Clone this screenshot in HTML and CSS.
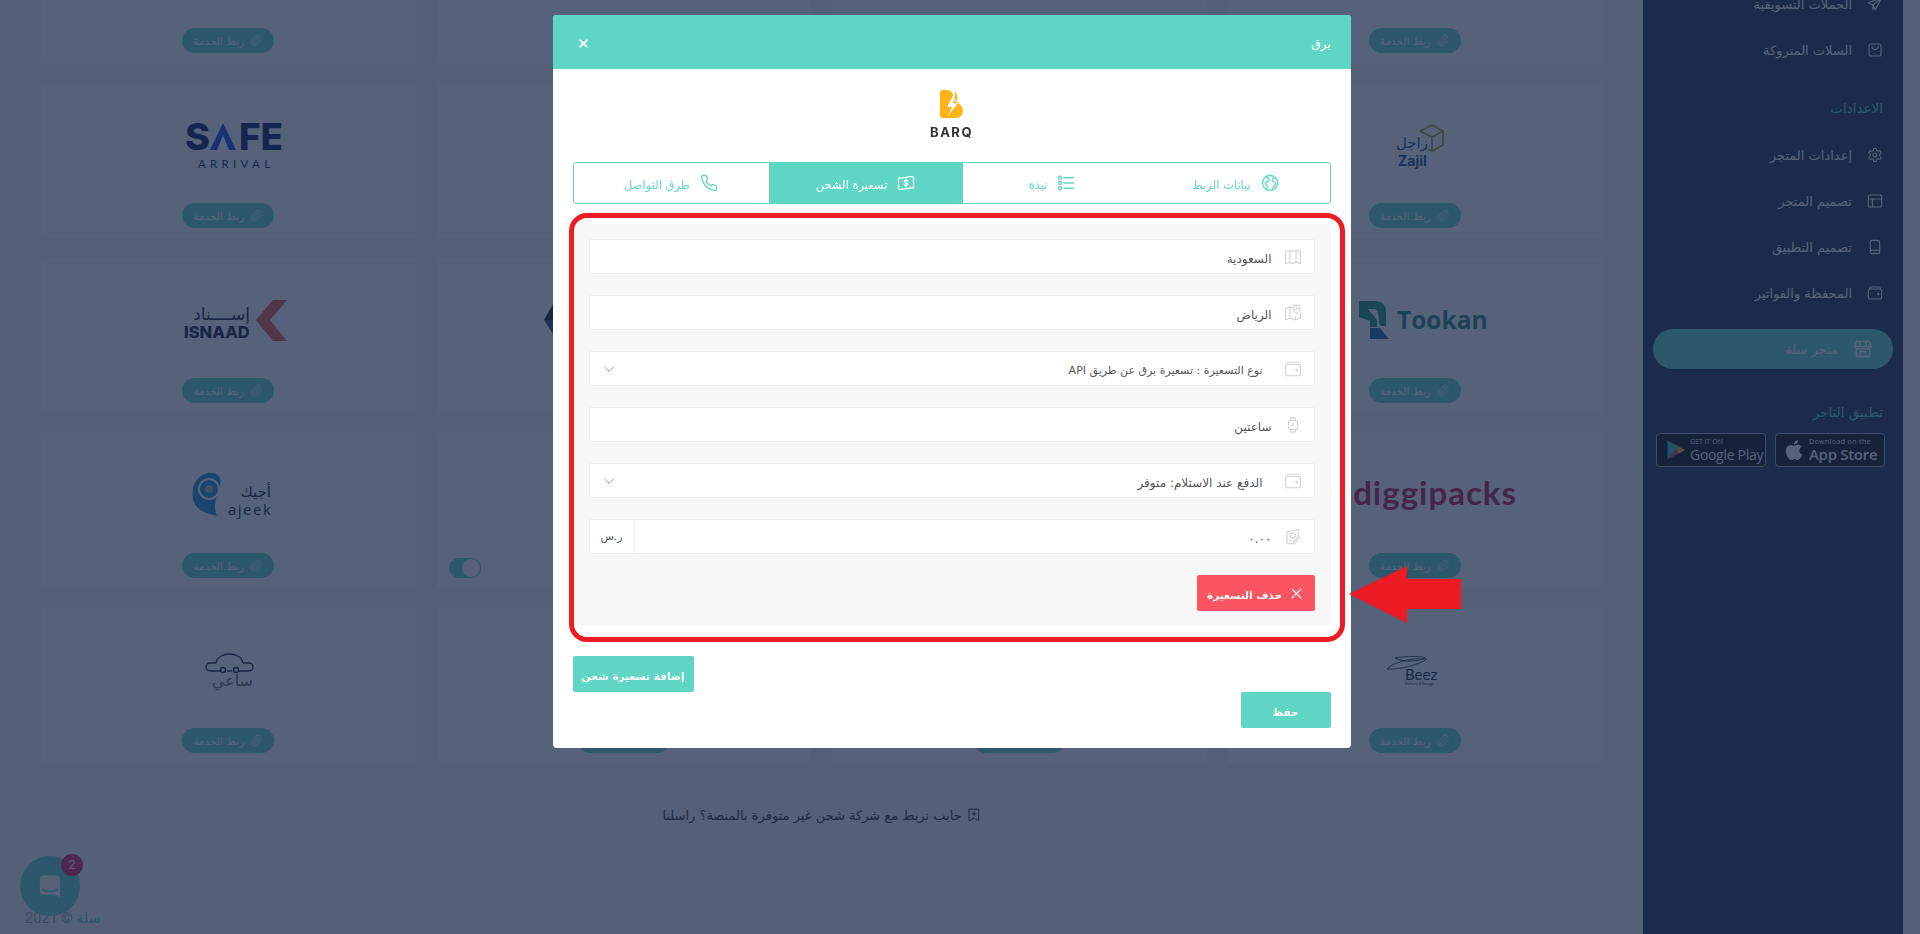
FILE: index.html
```html
<!DOCTYPE html>
<html lang="ar" dir="rtl">
<head>
<meta charset="utf-8">
<title>برق</title>
<link rel="stylesheet" href="styles.css">
</head>
<body>
<svg class="defs" xmlns="http://www.w3.org/2000/svg">
  <symbol id="i-clip" viewBox="0 0 24 24"><path d="m21.44 11.05-9.19 9.19a6 6 0 0 1-8.49-8.49l8.57-8.57A4 4 0 1 1 18 8.84l-8.59 8.57a2 2 0 0 1-2.83-2.83l8.49-8.48"/></symbol>
  <symbol id="i-plane" viewBox="0 0 24 24"><path d="M22 3 2 10l7 3.5L12.5 21zM9 13.5 22 3"/><path d="M9 13.5V20l3-3"/></symbol>
  <symbol id="i-bag" viewBox="0 0 24 24"><rect x="3" y="3" width="18" height="18" rx="3"/><path d="M7.500 6.500c0 6.500 9 6.500 9 0"/></symbol>
  <symbol id="i-gear" viewBox="0 0 24 24"><path d="M12.220 2h-.44a2 2 0 0 0-2 2v.18a2 2 0 0 1-1 1.730l-.43.25a2 2 0 0 1-2 0l-.15-.08a2 2 0 0 0-2.730.730l-.22.38a2 2 0 0 0 .73 2.730l.15.1a2 2 0 0 1 1 1.720v.51a2 2 0 0 1-1 1.740l-.15.09a2 2 0 0 0-.73 2.730l.22.38a2 2 0 0 0 2.730.730l.15-.08a2 2 0 0 1 2 0l.43.25a2 2 0 0 1 1 1.730V20a2 2 0 0 0 2 2h.44a2 2 0 0 0 2-2v-.18a2 2 0 0 1 1-1.730l.43-.25a2 2 0 0 1 2 0l.15.08a2 2 0 0 0 2.730-.730l.22-.39a2 2 0 0 0-.73-2.730l-.15-.08a2 2 0 0 1-1-1.740v-.5a2 2 0 0 1 1-1.740l.15-.09a2 2 0 0 0 .73-2.730l-.22-.38a2 2 0 0 0-2.730-.730l-.15.08a2 2 0 0 1-2 0l-.43-.25a2 2 0 0 1-1-1.730V4a2 2 0 0 0-2-2z"/><circle cx="12" cy="12" r="3"/></symbol>
  <symbol id="i-layout" viewBox="0 0 24 24"><rect x="2" y="3" width="20" height="18" rx="2"/><path d="M2 9h20M8 9v12"/></symbol>
  <symbol id="i-tablet" viewBox="0 0 24 24"><rect x="5" y="2" width="14" height="20" rx="2.500"/><path d="M5 17h14M12 19.500h.01"/></symbol>
  <symbol id="i-wallet" viewBox="0 0 24 24"><rect x="2" y="6" width="20" height="15" rx="3"/><path d="M4 6V5.500A2.500 2.500 0 0 1 6.500 3h11A2.500 2.500 0 0 1 20 5.500V6"/><circle cx="17" cy="13.500" r="1"/></symbol>
  <symbol id="i-store" viewBox="0 0 24 24"><path d="M4 3h16l2 6a3 3 0 0 1-5 2 3.500 3.500 0 0 1-5 0 3.500 3.500 0 0 1-5 0 3 3 0 0 1-5-2z"/><path d="M4 12v9h16v-9M9 21v-6h6v6M2 9h20M9 3 7.500 9M15 3l1.500 6"/></symbol>
  <symbol id="i-map" viewBox="0 0 24 24"><path d="M2 5c3-2 7-2 10 0 3-2 7-2 10 0v16c-3-2-7-2-10 0-3-2-7-2-10 0z"/><path d="M8 3.600v16M16 3.600v16"/></symbol>
  <symbol id="i-pin" viewBox="0 0 24 24"><path d="M11 5 8 4 2 6v15l6-2 7 2 7-2v-7"/><path d="M8 4v15M15 16v5"/><path d="M17 1.500a4.500 4.500 0 0 1 4.500 4.500c0 3.500-4.500 7-4.500 7s-4.500-3.500-4.500-7A4.500 4.500 0 0 1 17 1.500z"/><circle cx="17" cy="6" r="1"/></symbol>
  <symbol id="i-watch" viewBox="0 0 24 24"><rect x="6" y="6" width="12" height="12" rx="3.500"/><path d="m8.500 6 .8-3.500h5.400l.8 3.500M8.500 18l.8 3.500h5.400l.8-3.500M12 9v3.500H9.500"/></symbol>
  <symbol id="i-cash" viewBox="0 0 24 24"><path d="M4 21V5l15-3v8M4 21h9"/><circle cx="11.500" cy="10" r="3.500"/><path d="M8 17h4M21 13l-6 7-2.500.8.500-2.800 6-6.500z"/></symbol>
  <symbol id="i-globe" viewBox="0 0 24 24"><circle cx="12" cy="12" r="10"/><path d="M8 2.800c-1 2.200 1 3.200 2.500 4 1.500 1 .5 3-1 3.200-2.500.4-4.500 1-3.500 3.500l1.800 2.500c1 1.500.2 3 .2 5M20 5.500c-2 .2-4.500.5-5 2.500-.3 2 1.500 2.500 3 3 2 .8 1.500 2.500.5 3.500l-3 5"/></symbol>
  <symbol id="i-list" viewBox="0 0 24 24"><circle cx="4" cy="5" r="2"/><circle cx="4" cy="12" r="2"/><circle cx="4" cy="19" r="2"/><path d="M9 5h13M9 12h13M9 19h13"/></symbol>
  <symbol id="i-note" viewBox="0 0 24 24"><path d="M2 5c6 2 14-3 20-1v15c-6-2-14 3-20 1z"/><path d="M14.500 9c-1-1-5-.8-5 1.200 0 2.300 5 1 5 3.300 0 2-4 2-5 1M12 7v10"/></symbol>
  <symbol id="i-phone" viewBox="0 0 24 24"><path d="M22 16.920v3a2 2 0 0 1-2.180 2 19.790 19.790 0 0 1-8.630-3.070 19.500 19.500 0 0 1-6-6 19.790 19.790 0 0 1-3.070-8.670A2 2 0 0 1 4.110 2h3a2 2 0 0 1 2 1.720 12.840 12.840 0 0 0 .7 2.810 2 2 0 0 1-.45 2.110L8.090 9.910a16 16 0 0 0 6 6l1.270-1.270a2 2 0 0 1 2.110-.45 12.840 12.840 0 0 0 2.810.7A2 2 0 0 1 22 16.920z"/></symbol>
  <symbol id="i-chev" viewBox="0 0 24 24"><path d="m5 9 7 7 7-7"/></symbol>
  <symbol id="i-x" viewBox="0 0 24 24"><path d="M5 5l14 14M19 5 5 19"/></symbol>
  <symbol id="i-mark" viewBox="0 0 24 24"><path d="M4 2h16v20l-8-5-8 5z"/><path d="M12 7v6M9 10h6"/></symbol>
</svg>

<div class="page">
  <main class="main">
    <div class="grid">
      <div class="card"><div class="logo"></div><a class="link-btn"><svg class="ico"><use href="#i-clip"/></svg>ربط الخدمة</a></div>
      <div class="card"><div class="logo"></div><a class="link-btn"><svg class="ico"><use href="#i-clip"/></svg>ربط الخدمة</a></div>
      <div class="card"><div class="logo"></div><a class="link-btn"><svg class="ico"><use href="#i-clip"/></svg>ربط الخدمة</a></div>
      <div class="card"><div class="logo"></div><a class="link-btn"><svg class="ico"><use href="#i-clip"/></svg>ربط الخدمة</a></div>

      <div class="card">
        <div class="logo">
          <svg class="brand" viewBox="0 0 58 43" width="58" height="43">
            <path class="zj-box" d="M34 7 46 1 57 7v14l-11 6-4-2M34 7l12 6 11-6M46 13v14"/>
            <text class="zj-ar" x="26" y="24" text-anchor="middle">زاجل</text>
            <text class="zj-en" x="12" y="42">Zajil</text>
          </svg>
        </div>
        <a class="link-btn"><svg class="ico"><use href="#i-clip"/></svg>ربط الخدمة</a>
      </div>
      <div class="card"><div class="logo"></div><a class="link-btn"><svg class="ico"><use href="#i-clip"/></svg>ربط الخدمة</a></div>
      <div class="card"><div class="logo"></div><a class="link-btn"><svg class="ico"><use href="#i-clip"/></svg>ربط الخدمة</a></div>
      <div class="card">
        <div class="logo">
          <svg class="brand" viewBox="0 0 109 45" width="109" height="45">
            <text class="safe-big" x="11" y="27" textLength="25" lengthAdjust="spacingAndGlyphs">S</text>
            <polygon class="safe-tri" points="36,27 49,0 62,27 55,27 49,12 43,27"/>
            <text class="safe-big" x="65" y="27" textLength="44" lengthAdjust="spacingAndGlyphs">FE</text>
            <text class="safe-small" x="24" y="45">ARRIVAL</text>
          </svg>
        </div>
        <a class="link-btn"><svg class="ico"><use href="#i-clip"/></svg>ربط الخدمة</a>
      </div>

      <div class="card">
        <div class="logo">
          <svg class="brand" viewBox="0 0 142 40" width="142" height="40">
            <path class="tk-a" d="M15 1H32Q42 2 42 12V26H36L34 13Q33 9 29 9H24L33 20V27H26V21L15 17z"/>
            <path class="tk-b" d="M26 28H36L45 39H26z"/>
            <text class="tk-text" x="53" y="29">Tookan</text>
          </svg>
        </div>
        <a class="link-btn"><svg class="ico"><use href="#i-clip"/></svg>ربط الخدمة</a>
      </div>
      <div class="card"><div class="logo"></div><a class="link-btn"><svg class="ico"><use href="#i-clip"/></svg>ربط الخدمة</a></div>
      <div class="card">
        <div class="logo">
          <svg class="brand" viewBox="0 0 160 40" width="160" height="40"><polygon class="hex-a" points="0,20 9,4 14,4 14,20"/><polygon class="hex-b" points="0,20 14,20 14,38 9,34"/></svg>
        </div>
        <a class="link-btn"><svg class="ico"><use href="#i-clip"/></svg>ربط الخدمة</a>
      </div>
      <div class="card">
        <div class="logo">
          <svg class="brand" viewBox="0 0 119 41" width="119" height="41">
            <text class="is-ar" x="81" y="20" text-anchor="end">إســــناد</text>
            <text class="is-en" x="15" y="38">ISNAAD</text>
            <polygon class="is-chev" points="118,0 104,0 87,20 104,41 118,41 101,20"/>
          </svg>
        </div>
        <a class="link-btn"><svg class="ico"><use href="#i-clip"/></svg>ربط الخدمة</a>
      </div>

      <div class="card">
        <div class="logo">
          <svg class="brand" viewBox="0 0 204 40" width="204" height="40">
            <text class="digi" x="204" y="30" text-anchor="end">diggipacks</text>
          </svg>
        </div>
        <a class="link-btn"><svg class="ico"><use href="#i-clip"/></svg>ربط الخدمة</a>
      </div>
      <div class="card"><div class="logo"></div><a class="link-btn"><svg class="ico"><use href="#i-clip"/></svg>ربط الخدمة</a></div>
      <div class="card"><div class="logo"></div><span class="toggle"><span class="knob"></span></span></div>
      <div class="card">
        <div class="logo">
          <svg class="brand" viewBox="0 0 87 44" width="87" height="44">
            <path class="aj-drop" d="M23 0c9-1 14 4 12 12-2 10-8 20-3 31C20 40 10 37 8 26 6 13 12 2 23 0z"/>
            <circle class="aj-ring" cx="24" cy="16" r="11"/>
            <circle class="aj-drop" cx="24" cy="16" r="9"/>
            <circle class="aj-pupil" cx="24" cy="16" r="4"/>
            <text class="aj-ar" x="86" y="24" text-anchor="end">أجيك</text>
            <text class="aj-en" x="43" y="42">ajeek</text>
          </svg>
        </div>
        <a class="link-btn"><svg class="ico"><use href="#i-clip"/></svg>ربط الخدمة</a>
      </div>

      <div class="card">
        <div class="logo">
          <svg class="brand" viewBox="0 0 58 30" width="58" height="30">
            <path class="bz-line" d="M9 3c10-2 28-2 30 0-4 3-22 5-30 0zM1 14C10 5 30 3 41 4 34 9 14 15 1 14z"/>
            <text class="bz-text" x="19" y="25">Beez</text>
            <text class="bz-small" x="19" y="30">Delivery &amp; Storage</text>
          </svg>
        </div>
        <a class="link-btn"><svg class="ico"><use href="#i-clip"/></svg>ربط الخدمة</a>
      </div>
      <div class="card"><div class="logo"></div><a class="link-btn"><svg class="ico"><use href="#i-clip"/></svg>ربط الخدمة</a></div>
      <div class="card"><div class="logo"></div><a class="link-btn"><svg class="ico"><use href="#i-clip"/></svg>ربط الخدمة</a></div>
      <div class="card">
        <div class="logo">
          <svg class="brand" viewBox="0 0 51 41" width="51" height="41">
            <path class="sa-car" d="M13 13C15 1 38 1 40 13M13 13H7a3 3 0 0 0 0 8h10M24 21h5M36 21h10a3 3 0 0 0 0-8h-6"/>
            <circle class="sa-car" cx="20" cy="20" r="2.500"/><circle class="sa-car" cx="33" cy="20" r="2.500"/>
            <text class="sa-ar" x="50" y="36" text-anchor="end">ساعي</text>
          </svg>
        </div>
        <a class="link-btn"><svg class="ico"><use href="#i-clip"/></svg>ربط الخدمة</a>
      </div>
    </div>

    <p class="contact"><svg class="ico"><use href="#i-mark"/></svg>حابب نربط مع شركة شحن غير متوفرة بالمنصة؟ راسلنا</p>
    <p class="copyright" dir="ltr">2021 © <span class="copy-brand">سلة</span></p>
  </main>

  <aside class="side">
    <a class="side-row"><svg class="ico"><use href="#i-plane"/></svg>الحملات التسويقية</a>
    <a class="side-row"><svg class="ico"><use href="#i-bag"/></svg>السلات المتروكة</a>
    <h4 class="side-head side-head-a">الاعدادات</h4>
    <a class="side-row"><svg class="ico"><use href="#i-gear"/></svg>إعدادات المتجر</a>
    <a class="side-row"><svg class="ico"><use href="#i-layout"/></svg>تصميم المتجر</a>
    <a class="side-row"><svg class="ico"><use href="#i-tablet"/></svg>تصميم التطبيق</a>
    <a class="side-row"><svg class="ico"><use href="#i-wallet"/></svg>المحفظة والفواتير</a>
    <a class="store-pill"><svg class="ico"><use href="#i-store"/></svg>متجر سلة</a>
    <h4 class="side-head side-head-b">تطبيق التاجر</h4>
    <div class="badges">
      <div class="badge" dir="ltr">
        <svg class="badge-ico" viewBox="0 0 24 24"><path fill="#fff" d="M12.152 6.896c-.948 0-2.415-1.078-3.960-1.040-2.040.027-3.910 1.183-4.961 3.014-2.117 3.675-.546 9.103 1.519 12.090 1.013 1.454 2.208 3.090 3.792 3.039 1.520-.065 2.090-.987 3.935-.987 1.831 0 2.350.987 3.960.948 1.637-.026 2.676-1.480 3.676-2.948 1.156-1.688 1.636-3.325 1.662-3.415-.039-.013-3.182-1.221-3.220-4.857-.026-3.040 2.480-4.494 2.597-4.559-1.429-2.090-3.623-2.324-4.390-2.376-2-.156-3.675 1.090-4.610 1.090zM15.530 3.830c.843-1.012 1.400-2.427 1.245-3.830-1.207.052-2.662.805-3.532 1.818-.780.896-1.454 2.338-1.273 3.714 1.338.104 2.715-.688 3.559-1.701"/></svg>
        <div class="badge-text"><span class="badge-sm badge-sm-wide">Download on the</span><span class="badge-lg badge-lg-bold">App Store</span></div>
      </div>
      <div class="badge" dir="ltr">
        <svg class="badge-ico" viewBox="0 0 24 24"><path d="M3 .5v23L13 12z" fill="#2fb6e8"/><path d="M3 .5 13 12l4-4z" fill="#3ddc84"/><path d="M3 23.500 13 12l4 4z" fill="#e8412f"/><path d="m17 8 7 4-7 4-4-4z" fill="#fbbc04"/></svg>
        <div class="badge-text"><span class="badge-sm">GET IT ON</span><span class="badge-lg">Google Play</span></div>
      </div>
    </div>
  </aside>
</div>

<div class="chat">
  <svg class="chat-ico" viewBox="0 0 24 26"><path d="M5 1h14a4 4 0 0 1 4 4v20l-5-3H5a4 4 0 0 1-4-4V5a4 4 0 0 1 4-4z"/><path class="chat-smile" d="M4 16c4 3 12 3 16 0"/></svg>
  <span class="chat-badge">2</span>
</div>

<div class="overlay">
  <section class="modal">
    <header class="modal-head">
      <h3 class="modal-title">برق</h3>
      <svg class="ico modal-close"><use href="#i-x"/></svg>
    </header>
    <div class="modal-body">
      <div class="brand-logo">
        <svg class="barq-mark" viewBox="0 0 23 28"><path class="barq-b" d="M0 3a3 3 0 0 1 3-3h4c4 0 6 3 6 7v3c5 2 10 6 10 11 0 4-3 7-7 7H3a3 3 0 0 1-3-3z"/><path class="barq-b" d="M15 1c2 3 3 6 2 10l-3-2c1-3 1-5 1-8z"/><path class="barq-bolt" d="M14 4 7 17h5L8 26l10-13h-5l2-7z"/></svg>
        <span class="barq-name" dir="ltr">BARQ</span>
      </div>

      <nav class="tabs">
        <a class="tab"><svg class="ico"><use href="#i-globe"/></svg><span class="t">بيانات الربط</span></a>
        <a class="tab"><svg class="ico"><use href="#i-list"/></svg><span class="t">نبذة</span></a>
        <a class="tab tab-active"><svg class="ico"><use href="#i-note"/></svg><span class="t">تسعيرة الشحن</span></a>
        <a class="tab"><svg class="ico"><use href="#i-phone"/></svg><span class="t">طرق التواصل</span></a>
      </nav>

      <div class="panel">
        <div class="field"><svg class="ico"><use href="#i-map"/></svg><span class="t">السعودية</span></div>
        <div class="field"><svg class="ico"><use href="#i-pin"/></svg><span class="t">الرياض</span></div>
        <div class="field field-select"><svg class="ico"><use href="#i-wallet"/></svg><span class="t t-tight">نوع التسعيرة : تسعيرة برق عن طريق API</span><svg class="ico chev"><use href="#i-chev"/></svg></div>
        <div class="field"><svg class="ico"><use href="#i-watch"/></svg><span class="t">ساعتين</span></div>
        <div class="field field-select"><svg class="ico"><use href="#i-wallet"/></svg><span class="t">الدفع عند الاستلام: متوفر</span><svg class="ico chev"><use href="#i-chev"/></svg></div>
        <div class="field"><svg class="ico"><use href="#i-cash"/></svg><span class="t">٠.٠٠</span><span class="addon">ر.س</span></div>
        <button class="btn btn-del"><svg class="ico"><use href="#i-x"/></svg><span class="t">حذف التسعيرة</span></button>
      </div>

      <button class="btn btn-add"><span class="t">إضافة تسعيرة شحن</span></button>
      <button class="btn btn-save"><span class="t">حفظ</span></button>
    </div>
  </section>
</div>

<div class="mark-ring"></div>
<svg class="mark-arrow" viewBox="0 0 112 57" width="112" height="57"><polygon points="0,28 58,0 58,13 112,13 112,43 58,43 58,57"/></svg>
</body>
</html>
```

FILE: styles.css
```css
* { box-sizing: border-box; }
html, body { margin: 0; height: 934px; overflow: hidden; }
body {
  background: #f5f6f8;
  font-family: "DejaVu Sans", "Noto Sans", sans-serif;
  font-size: 12px;
  color: #555;
}
a { text-decoration: none; color: inherit; }
h3, h4, p { margin: 0; font-weight: 400; }
.defs { position: absolute; width: 0; height: 0; }
.ico {
  width: 16px; height: 16px; flex: none;
  fill: none; stroke: currentColor; stroke-width: 1.7;
  stroke-linecap: round; stroke-linejoin: round;
}
.t { padding-top: 4px; }

/* page behind the dialog */
.page { display: flex; flex-direction: row-reverse; width: 1903px; height: 934px; margin-right: 17px; }
.main { flex: 1; min-width: 0; }
.grid {
  display: grid;
  grid-template-columns: repeat(4, 1fr);
  grid-auto-rows: 155px;
  gap: 20px 21px;
  margin-top: -92px;
  padding: 0 41px;
}
.card {
  position: relative;
  display: flex; flex-direction: column; align-items: center;
  background: #fff;
  padding-bottom: 10px;
}
.logo { flex: 1; min-height: 0; display: flex; align-items: center; justify-content: center; padding-top: 4px; }
.brand { display: block; direction: ltr; overflow: visible; }
.link-btn {
  display: flex; align-items: center; justify-content: center; gap: 6px;
  width: 92px; height: 25px; flex: none;
  border-radius: 13px;
  background: #5fd6c5; color: #fff;
  font-size: 10.500px;
}
.link-btn .ico { width: 13px; height: 13px; stroke-width: 1.500; }
.toggle {
  position: absolute; left: 12px; bottom: 10px;
  width: 32px; height: 20px; border-radius: 10px;
  background: #5fd6c5; border: 1px solid #5fd6c5;
}
.knob { display: block; position: absolute; right: 0; top: 0; width: 18px; height: 18px; border-radius: 50%; background: #fff; }

/* logos */
.zj-box { fill: none; stroke: #a89a2a; stroke-width: 1.800; }
.zj-ar { font-size: 15px; fill: #123f86; }
.zj-en { font: 700 14px "Inter", sans-serif; fill: #123f86; }
.safe-big { font: 800 37px "Inter", sans-serif; fill: #040e5c; }
.safe-tri { fill: #0a3cff; }
.safe-small { font: 400 11.500px "Lato", sans-serif; letter-spacing: 4.300px; fill: #040e5c; }
.tk-a { fill: #158a72; }
.tk-b { fill: #0d5f9c; }
.tk-text { font: 700 24.500px "Open Sans", sans-serif; fill: #17827c; }
.hex-a { fill: #0b1030; }
.hex-b { fill: #2a3e62; }
.is-ar { font-size: 17px; fill: #0b1030; }
.is-en { font: 800 16.500px "Inter", sans-serif; fill: #0b1030; }
.is-chev { fill: #f04e48; }
.digi { font: 700 33px "Lato", sans-serif; letter-spacing: 1px; fill: #c40f3c; }
.aj-drop { fill: #0c86d2; }
.aj-ring { fill: #fff; }
.aj-pupil { fill: #aab8c8; }
.aj-ar { font-size: 15px; fill: #0b1030; }
.aj-en { font: 400 15px "Open Sans", sans-serif; letter-spacing: 1.500px; fill: #0b1030; }
.sa-car { fill: none; stroke: #0b1030; stroke-width: 1.400; }
.sa-ar { font-size: 16px; fill: #6d5a4a; }
.bz-line { fill: none; stroke: #0b1030; stroke-width: .8; }
.bz-text { font: 400 15px "Lato", sans-serif; fill: #0b1030; }
.bz-small { font: 400 3.500px "Lato", sans-serif; fill: #0b1030; }

/* below the grid */
.contact {
  display: flex; align-items: center; justify-content: center; gap: 5px;
  margin-top: 42px; height: 20px;
  font-size: 13px; color: #222;
}
.contact .ico { width: 14px; height: 14px; }
.copyright {
  margin-top: 84px; padding-left: 25px;
  font-family: "Roboto", "DejaVu Sans", sans-serif; font-size: 14.500px; line-height: 20px;
  color: #909dad;
}
.copy-brand { color: #5fd6c5; }

/* sidebar */
.side {
  width: 260px; flex: none; height: 934px;
  background: #142648; color: #fff;
  padding-top: 0; font-size: 13px;
  overflow: hidden;
}
.side-row {
  display: flex; align-items: center; gap: 15px;
  height: 46px; padding-right: 20px;
}
.side-row:first-child { margin-top: -19px; }
.side-head { font-size: 13.500px; height: 24px; line-height: 24px; padding-right: 20px; color: #5fd6c5; }
.side-head-a { margin: 23px 0 12px; }
.side-head-b { margin: 31px 0 9px; }
.store-pill {
  display: flex; align-items: center; gap: 15px;
  height: 40px; margin: 13px 10px 0; padding-right: 20px;
  border-radius: 20px; background: #5fd6c5;
  font-size: 13px;
}
.store-pill .ico { width: 20px; height: 20px; }
.badges { display: flex; gap: 9px; padding-right: 18px; }
.badge {
  display: flex; align-items: center; gap: 5px;
  width: 110px; height: 34px; padding-left: 8px;
  background: #000; border: 1px solid #a6a6a6; border-radius: 4px;
}
.badge-ico { width: 20px; height: 22px; flex: none; }
.badge-text { display: flex; flex-direction: column; font-family: "Open Sans", sans-serif; color: #fff; white-space: nowrap; }
.badge-sm { font-size: 7px; line-height: 8px; }
.badge-sm-wide { letter-spacing: .4px; }
.badge-lg { font-size: 14px; line-height: 17px; letter-spacing: -.3px; }
.badge-lg-bold { font-weight: 600; font-size: 15px; }

/* chat launcher */
.chat {
  position: fixed; left: 20px; top: 856px;
  display: flex; align-items: center; justify-content: center;
  width: 60px; height: 60px; border-radius: 50%;
  background: #5fd6c5;
}
.chat-ico { width: 22px; height: 25px; fill: #fff; }
.chat-smile { fill: none; stroke: #5fd6c5; stroke-width: 1.800; stroke-linecap: round; }
.chat-badge {
  position: absolute; left: 41px; top: -2px;
  width: 22px; height: 22px; border-radius: 50%;
  background: #e5105f; color: #fff;
  font: 400 13px/22px "Roboto", sans-serif; text-align: center;
}

/* dialog */
.overlay {
  position: fixed; inset: 0;
  display: flex; justify-content: center; align-items: flex-start;
  padding: 15px 17px 0 0;
  background: rgba(28, 46, 76, .75);
}
.modal {
  width: 798px; height: 733px;
  background: #fff; border-radius: 4px; overflow: hidden;
}
.modal-head {
  display: flex; align-items: center; justify-content: space-between;
  height: 54px; padding: 0 20px 0 25px;
  background: #5fd6c5; color: #fff;
}
.modal-title { font-size: 12px; padding-top: 4px; }
.modal-close { width: 11px; height: 11px; stroke-width: 4; margin-top: 2px; }
.modal-body { display: flex; flex-direction: column; padding: 21px 20px 0; }
.brand-logo { display: flex; flex-direction: column; align-items: center; height: 72px; }
.barq-mark { width: 23px; height: 28px; }
.barq-b { fill: #fdb414; }
.barq-bolt { fill: #fff; }
.barq-name { margin-top: 7px; font: 700 13px/14px "Inter", sans-serif; letter-spacing: 1.500px; color: #333; }

.tabs {
  display: grid; grid-template-columns: 188px 179px 194px 1fr;
  height: 42px; border: 1px solid #5fd6c5; border-radius: 3px;
  color: #5fd6c5; overflow: hidden; font-size: 11.500px;
}
.tab { display: flex; align-items: center; justify-content: center; gap: 10px; margin: -1px 0; }
.tab .ico { width: 18px; height: 18px; }
.tab-active { background: #5fd6c5; color: #fff; }

.panel {
  display: flex; flex-direction: column; gap: 21px;
  height: 402px; margin-top: 20px; padding: 15px 16px;
  background: #f7f7f7; border-radius: 5px;
}
.field {
  display: flex; align-items: center; gap: 12px;
  height: 35px; flex: none; padding-right: 12px;
  background: #fff; border: 1px solid #eee; border-radius: 2px;
  color: #555;
}
.field .ico { width: 18px; height: 18px; color: #d2d2d2; stroke-width: 1.500; }
.field-select { gap: 21px; }
.t-tight { font-size: 11px; }
.field .chev { width: 14px; height: 14px; margin-right: auto; margin-left: 12px; color: #888; }
.addon {
  display: flex; align-items: center; justify-content: center;
  width: 45px; height: 100%; margin-right: auto;
  border-right: 1px solid #eee; font-size: 11px;
}
.btn {
  display: flex; align-items: center; justify-content: center; gap: 7px;
  height: 36px; flex: none; padding: 0;
  border: 0; border-radius: 2px; color: #fff;
  font-family: inherit; font-size: 10.500px; font-weight: 700;
}
.btn-del { width: 118px; background: #fa5560; align-self: flex-start; }
.btn-del .ico { width: 15px; height: 15px; stroke-width: 2.200; }
.btn-add { width: 121px; background: #5fd6c5; align-self: flex-end; margin-top: 30px; }
.btn-save { width: 90px; background: #5fd6c5; align-self: flex-start; }

/* annotation drawn on top of the shot */
.mark-ring {
  position: fixed; left: 569px; top: 213px;
  width: 776px; height: 429px;
  border: 5px solid #ed1c24; border-radius: 18px;
}
.mark-arrow { position: fixed; left: 1349px; top: 566px; fill: #ed1c24; }
```
